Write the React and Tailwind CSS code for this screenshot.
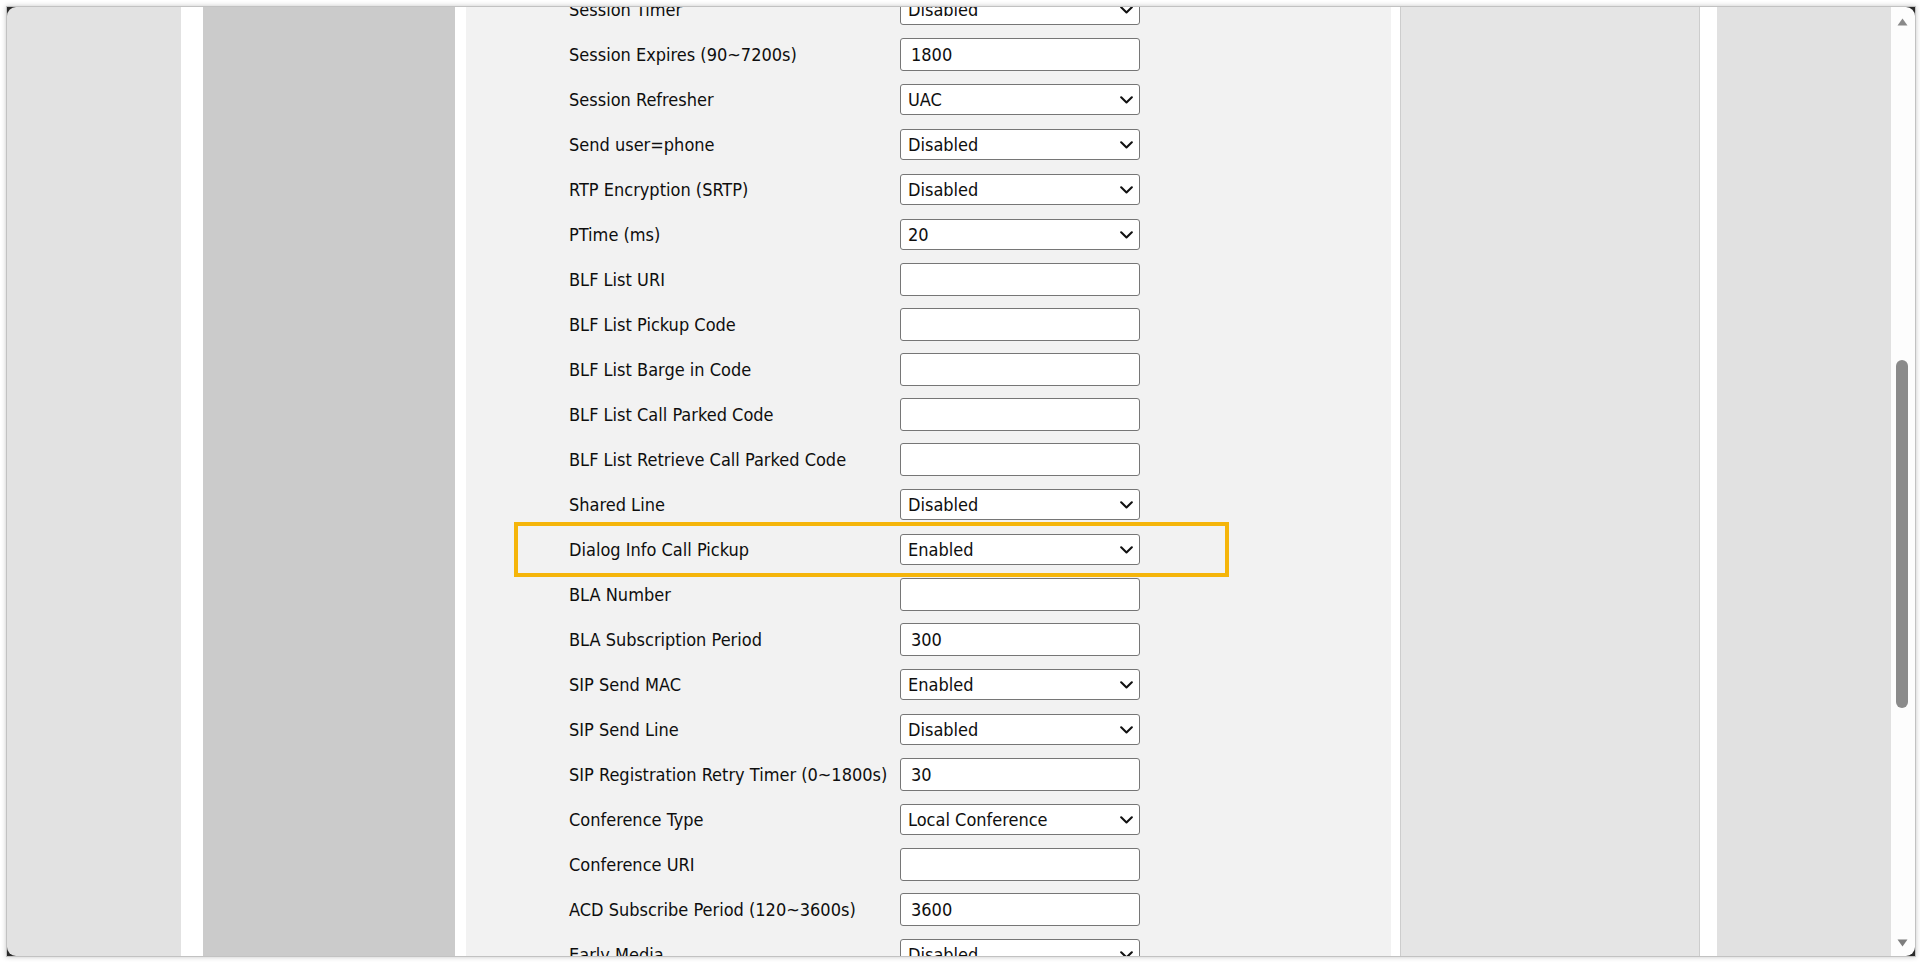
import {useState} from "react";

// 계정 고급 설정 목록 (스크린샷 순서 그대로)
const rows = [
    {label: "Session Timer", type: "select", value: "Disabled"},
    {label: "Session Expires (90~7200s)", type: "input", value: "1800"},
    {label: "Session Refresher", type: "select", value: "UAC"},
    {label: "Send user=phone", type: "select", value: "Disabled"},
    {label: "RTP Encryption (SRTP)", type: "select", value: "Disabled"},
    {label: "PTime (ms)", type: "select", value: "20"},
    {label: "BLF List URI", type: "input", value: ""},
    {label: "BLF List Pickup Code", type: "input", value: ""},
    {label: "BLF List Barge in Code", type: "input", value: ""},
    {label: "BLF List Call Parked Code", type: "input", value: ""},
    {label: "BLF List Retrieve Call Parked Code", type: "input", value: ""},
    {label: "Shared Line", type: "select", value: "Disabled"},
    {label: "Dialog Info Call Pickup", type: "select", value: "Enabled", highlight: true},
    {label: "BLA Number", type: "input", value: ""},
    {label: "BLA Subscription Period", type: "input", value: "300"},
    {label: "SIP Send MAC", type: "select", value: "Enabled"},
    {label: "SIP Send Line", type: "select", value: "Disabled"},
    {label: "SIP Registration Retry Timer (0~1800s)", type: "input", value: "30"},
    {label: "Conference Type", type: "select", value: "Local Conference"},
    {label: "Conference URI", type: "input", value: ""},
    {label: "ACD Subscribe Period (120~3600s)", type: "input", value: "3600"},
    {label: "Early Media", type: "select", value: "Disabled"},
];

const fontCls = "font-['DejaVu_Sans_Condensed','DejaVu_Sans',sans-serif] font-stretch-condensed text-[18px] text-[#0e0e0e]";

function Chevron() {
    return (
        <svg className="pointer-events-none absolute right-[7px] top-1/2 -translate-y-1/2" width="13" height="8" viewBox="0 0 13 8">
            <path d="M1.2 1.3 L6.5 6.4 L11.8 1.3" fill="none" stroke="#111" strokeWidth="2.1" strokeLinecap="round" strokeLinejoin="round"/>
        </svg>
    );
}

function Field({row}) {
    const [value, setValue] = useState(row.value);

    if (row.type === "select") {
        return (
            <div className="relative w-[240px] h-[31px]">
                <select
                    value={value}
                    onChange={(e) => setValue(e.target.value)}
                    className={`appearance-none w-full h-full bg-white border border-[#767676] rounded-[3px] pl-[7px] pr-[26px] outline-none ${fontCls}`}
                >
                    <option>{row.value}</option>
                </select>
                <Chevron/>
            </div>
        );
    }

    return (
        <input
            value={value}
            onChange={(e) => setValue(e.target.value)}
            className={`w-[240px] h-[33px] bg-white border border-[#767676] rounded-[3px] px-[10px] outline-none ${fontCls}`}
        />
    );
}

function ScrollBar() {
    return (
        <div className="w-[24px] bg-[#fdfdfd] flex flex-col pl-[6px] pt-[11px] pb-[9px]">
            <svg width="11" height="8" viewBox="0 0 11 8">
                <path d="M5.5 0.5 L10.5 7.5 L0.5 7.5 Z" fill="#8a8a8a"/>
            </svg>
            <div className="mt-[334px] ml-[-1px] w-[12px] h-[348px] rounded-full bg-[#8b8b8b]"/>
            <svg className="mt-auto" width="11" height="8" viewBox="0 0 11 8">
                <path d="M0.5 0.5 L10.5 0.5 L5.5 7.5 Z" fill="#7d7d7d"/>
            </svg>
        </div>
    );
}

export default function App() {
    return (
        <div className="w-[1920px] h-[963px] bg-white pt-[6px] pl-[6px] overflow-hidden">
            <div className="w-[1910px] h-[951px] border border-[#c2c2c2] bg-[#2a2a2a] shadow-[0_0_5px_rgba(0,0,0,0.22)]">
                <div className="flex h-full rounded-[9px] overflow-hidden">
                    <div className="w-[174px] bg-[#e2e2e2]"/>
                    <div className="w-[22px] bg-white"/>
                    <div className="w-[252px] bg-[#cbcbcb]"/>
                    <div className="w-[11px] bg-white"/>

                    {/* 설정 폼 (스크롤된 상태) */}
                    <main className="w-[925px] bg-[#f2f2f2] overflow-hidden">
                        <div className="mt-[-20px]">
                            {rows.map((row) => (
                                <div key={row.label} className="relative flex items-center h-[45px] pl-[103px]">
                                    <span className={`w-[331px] whitespace-nowrap ${fontCls}`}>{row.label}</span>
                                    <Field row={row}/>
                                    {row.highlight && (
                                        <div className="pointer-events-none absolute left-[48px] top-[-5px] bottom-[-5px] w-[715px] border-[4px] border-[#f5b50a]"/>
                                    )}
                                </div>
                            ))}
                        </div>
                    </main>

                    <div className="w-[9px] bg-white"/>
                    <div className="w-[300px] bg-[#e5e5e5] border-x border-[#cdcdcd]"/>
                    <div className="w-[17px] bg-white"/>
                    <div className="w-[174px] bg-[#e1e1e1]"/>
                    <ScrollBar/>
                </div>
            </div>
        </div>
    );
}
